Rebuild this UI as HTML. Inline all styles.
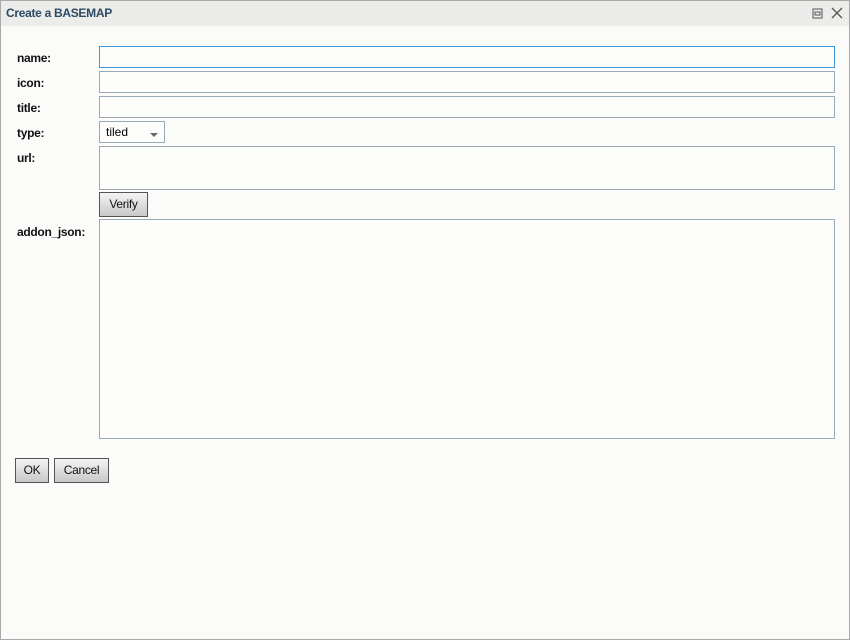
<!DOCTYPE html>
<html><head><style>
body{margin:0;width:850px;height:640px;background:#fff;font-family:"Liberation Sans",sans-serif;font-size:12px;}
.win{position:absolute;left:0;top:0;width:848px;height:638px;border:1px solid #a9a9a9;background:#fbfcfa;}
.tb{position:absolute;left:0;top:0;right:0;height:25px;background:#ececea;}
.tb span{position:absolute;left:5px;top:5px;font-weight:bold;color:#2c4a63;font-size:12px;letter-spacing:-0.3px;}
.lab{position:absolute;left:16px;font-weight:bold;color:#111;letter-spacing:-0.3px;}
.in{position:absolute;left:98px;width:734px;border:1px solid #9aaabb;background:#fdfefc;}
.btn{position:absolute;border:1px solid #555;background:linear-gradient(#f4f4f4,#c8c8c8);text-align:center;line-height:22px;color:#111;letter-spacing:-0.3px;}
</style></head><body>
<div class="win">
<div class="tb"><span>Create a BASEMAP</span>
<svg style="position:absolute;left:811px;top:7px" width="11" height="11"><rect x="1" y="1" width="9" height="9" fill="none" stroke="#555"/><rect x="3" y="4" width="5" height="3" fill="none" stroke="#555"/></svg>
<svg style="position:absolute;left:830px;top:6px" width="12" height="12"><path d="M1 1L11 11M11 1L1 11" stroke="#555" stroke-width="1.3"/></svg>
</div>
<div class="lab" style="top:50px">name:</div>
<div class="in" style="top:45px;height:20px;border-color:#3c9ad6"></div>
<div class="lab" style="top:75px">icon:</div>
<div class="in" style="top:70px;height:20px"></div>
<div class="lab" style="top:100px">title:</div>
<div class="in" style="top:95px;height:20px"></div>
<div class="lab" style="top:125px">type:</div>
<div class="in" style="top:120px;height:20px;width:64px"><span style="position:absolute;left:6px;top:3px">tiled</span><span style="position:absolute;left:50px;top:11px;border:4px solid transparent;border-top:4px solid #666;border-bottom:0"></span></div>
<div class="lab" style="top:150px">url:</div>
<div class="in" style="top:145px;height:42px"></div>
<div class="btn" style="left:98px;top:191px;width:47px;height:23px">Verify</div>
<div class="lab" style="top:224px">addon_json:</div>
<div class="in" style="top:218px;height:218px"></div>
<div class="btn" style="left:14px;top:457px;width:32px;height:23px">OK</div>
<div class="btn" style="left:53px;top:457px;width:53px;height:23px">Cancel</div>
</div>
</body></html>
